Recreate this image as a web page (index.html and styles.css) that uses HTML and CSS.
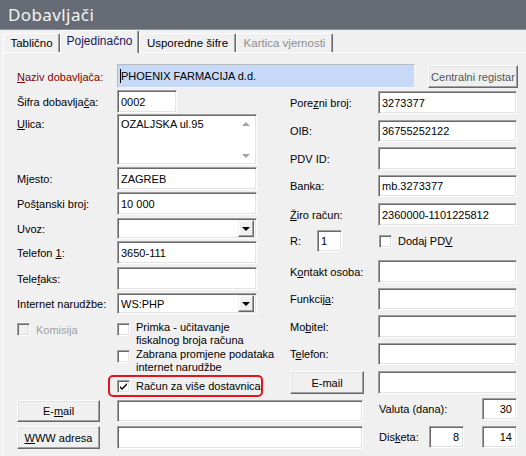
FILE: index.html
```html
<!DOCTYPE html>
<html lang="hr">
<head>
<meta charset="utf-8">
<title>Dobavljači</title>
<link rel="stylesheet" href="styles.css">
</head>
<body>
<div class="window">
  <div class="titlebar">Dobavljači</div>
  <div class="tabs">
    <div class="tab t1">Tablično</div>
    <div class="tab t2 active">Pojedinačno</div>
    <div class="tab t3">Usporedne šifre</div>
    <div class="tab t4 disabled">Kartica vjernosti</div>
  </div>
  <div class="panel">
    <div class="toprow">
      <div class="lbl naziv-lbl"><span><u>N</u>aziv dobavljača:</span></div>
      <div class="inp naziv"><span class="caret"></span><span>PHOENIX FARMACIJA d.d.</span></div>
      <div class="btn central">Centralni registar</div>
    </div>

    <div class="cols">
      <div class="lcol">
        <div class="field f-sifra"><div class="lbl"><span>Šifra dobavlja<u>č</u>a:</span></div><div class="inp w60">0002</div></div>
        <div class="field f-ulica"><div class="lbl top"><span><u>U</u>lica:</span></div>
          <div class="inp textarea"><span class="ta-text">OZALJSKA ul.95</span>
            <span class="scroll"><span class="tri up"></span><span class="tri down"></span></span>
          </div>
        </div>
        <div class="field f-mjesto"><div class="lbl"><span>M<u>j</u>esto:</span></div><div class="inp w140">ZAGREB</div></div>
        <div class="field f-post"><div class="lbl"><span>Poš<u>t</u>anski broj:</span></div><div class="inp w140">10 000</div></div>
        <div class="field f-uvoz"><div class="lbl"><span>Uvoz:</span></div><div class="inp w140 sel"><span class="seltext"></span><span class="dd"><span class="tri-d"></span></span></div></div>
        <div class="field f-tel"><div class="lbl"><span>Telefon <u>1</u>:</span></div><div class="inp w140">3650-111</div></div>
        <div class="field f-fax"><div class="lbl"><span>Tele<u>f</u>aks:</span></div><div class="inp w140"></div></div>
        <div class="field f-inet"><div class="lbl"><span>Internet narudžbe:</span></div><div class="inp w140 sel"><span class="seltext">WS:PHP</span><span class="dd"><span class="tri-d"></span></span></div></div>

        <div class="chkrow r-primka">
          <div class="komisija"><span class="cb dis"></span><span class="cbl dis-t">Komisija</span></div>
          <div class="chk"><span class="cb"></span><span class="cbl two">Primka - učitavanje<br>fiskalnog broja računa</span></div>
        </div>
        <div class="chkrow r-zabrana">
          <div class="chk"><span class="cb"></span><span class="cbl two">Zabrana promjene podataka<br>internet narudžbe</span></div>
        </div>
        <div class="redbox">
          <span class="cb"><svg class="tick" viewBox="0 0 7 7" width="7" height="7"><path d="M0 3 L2 5 L7 0 L7 2 L2 7 L0 5 Z" fill="#000"/></svg></span>
          <span class="cbl">Račun za više dostavnica</span>
        </div>
      </div>

      <div class="rcol">
        <div class="field r-porez"><div class="lbl rl"><span>Pore<u>z</u>ni broj:</span></div><div class="inp w139">3273377</div></div>
        <div class="field r-oib"><div class="lbl rl"><span>OIB:</span></div><div class="inp w139">36755252122</div></div>
        <div class="field r-pdv"><div class="lbl rl"><span>PDV ID:</span></div><div class="inp w139"></div></div>
        <div class="field r-banka"><div class="lbl rl"><span>Banka:</span></div><div class="inp w139">mb.3273377</div></div>
        <div class="field r-ziro"><div class="lbl rl"><span><u>Ž</u>iro račun:</span></div><div class="inp w139">2360000-1101225812</div></div>
        <div class="field r-r">
          <div class="lbl rlr"><span>R:</span></div><div class="inp w25">1</div>
          <div class="chk pdv"><span class="cb"></span><span class="cbl">Dodaj PD<u>V</u></span></div>
        </div>
        <div class="field r-kontakt"><div class="lbl rl"><span>K<u>o</u>ntakt osoba:</span></div><div class="inp w139"></div></div>
        <div class="field r-funk"><div class="lbl rl"><span>Funkcij<u>a</u>:</span></div><div class="inp w139"></div></div>
        <div class="field r-mob"><div class="lbl rl"><span>Mo<u>b</u>itel:</span></div><div class="inp w139"></div></div>
        <div class="field r-telefon"><div class="lbl rl"><span>T<u>e</u>lefon:</span></div><div class="inp w139"></div></div>
        <div class="field r-email"><div class="btn btn-re">E-mail</div><div class="inp w139"></div></div>
      </div>
    </div>

    <div class="bottom">
      <div class="bleft">
        <div class="field b-email"><div class="btn btn-l"><span>E-<u>m</u>ail</span></div><div class="inp w246"></div></div>
        <div class="field b-www"><div class="btn btn-l"><span><u>W</u>WW adresa</span></div><div class="inp w246"></div></div>
      </div>
      <div class="bright">
        <div class="field b-valuta"><div class="lbl vl"><span>Valuta (dana):</span></div><div class="inp w35 num">30</div></div>
        <div class="field b-disk"><div class="lbl dl"><span>Dis<u>k</u>eta:</span></div><div class="inp w35 num">8</div><div class="inp w35 num gap18">14</div></div>
      </div>
    </div>
  </div>
</div>
</body>
</html>
```
FILE: styles.css
```css
* { box-sizing: border-box; }
html, body { margin: 0; padding: 0; }
body {
  width: 526px;
  height: 456px;
  overflow: hidden;
  background: #f0f0f0;
  font-family: "Liberation Sans", Arial, sans-serif;
  font-size: 11px;
  color: #000;
}
u { text-decoration: underline; text-underline-offset: 1px; }

.titlebar {
  height: 30px;
  background: #676b76;
  color: #f4f4f4;
  font-family: "Noto Sans", "DejaVu Sans", sans-serif;
  font-size: 17px;
  letter-spacing: 0.4px;
  padding-left: 8px;
  display: flex;
  align-items: center;
  border-bottom: 1px solid #8d9098;
}

.tabs {
  height: 22px;
  display: flex;
  align-items: flex-end;
  padding-left: 3px;
  position: relative;
  z-index: 2;
}
.tab {
  height: 19px;
  border: 1px solid;
  border-color: #fff #696969 transparent #fff;
  box-shadow: inset -1px 0 #a0a0a0;
  border-radius: 2px 2px 0 0;
  display: flex;
  align-items: center;
  justify-content: center;
  font-size: 11.5px;
  background: #f0f0f0;
  border-bottom: none;
}
.t1 { width: 57px; }
.t2 { width: 79px; }
.t3 { width: 97px; }
.t4 { width: 97px; }
.tab.active {
  height: 23px;
  margin-bottom: -1px;
  color: #18185a;
  padding-bottom: 2px;
  font-size: 12px;
}
.tab.disabled { color: #8f8f8f; }

.panel {
  margin-left: 2px;
  height: 405px;
  border-top: 1px solid #fff;
  border-left: 1px solid #fff;
  padding: 11px 0 0 14px;
  position: relative;
  z-index: 1;
}

.lbl {
  width: 100px;
  flex: none;
  display: flex;
  align-items: center;
  align-self: stretch;
  white-space: nowrap;
}
.lbl.top { align-items: flex-start; padding-top: 4px; }
.naziv-lbl { color: #800000; }

.inp {
  background: #fff;
  border: 1px solid;
  border-color: #a0a0a0 #fff #fff #a0a0a0;
  box-shadow: inset 1px 1px #696969, inset -1px -1px #e3e3e3;
  padding: 0 2px 0 3px;
  display: flex;
  align-items: center;
  flex: none;
  white-space: nowrap;
  overflow: hidden;
  height: 23px;
}
.w60 { width: 60px; }
.w140 { width: 140px; }
.w139 { width: 139px; }
.w25 { width: 25px; }
.w35 { width: 35px; }
.w246 { width: 246px; }
.num { justify-content: flex-end; padding-right: 4px; }
.gap18 { margin-left: 18px; }

.btn {
  background: #f0f0f0;
  border: 1px solid;
  border-color: #fff #696969 #696969 #fff;
  box-shadow: inset -1px -1px #a0a0a0, inset 1px 1px #e3e3e3;
  display: flex;
  align-items: center;
  justify-content: center;
  flex: none;
  white-space: nowrap;
}

.toprow { display: flex; height: 26px; }
.naziv {
  width: 298px;
  height: 24px;
  background: #c7d9f7;
  border-color: #b8bcc4 #f4f4f4 #f4f4f4 #b8bcc4;
  box-shadow: none;
  padding-left: 2px;
}
.caret { width: 1px; height: 14px; background: #000; }
.central {
  width: 90px;
  height: 23px;
  margin-left: 13px;
  margin-top: 1px;
  color: #555;
}

.cols { display: flex; }
.lcol { width: 273px; flex: none; }
.rcol { width: 228px; flex: none; }

.field { display: flex; align-items: flex-start; }

/* left column rows */
.f-sifra { margin-bottom: 1px; }
.f-ulica { margin-bottom: 2px; }
.f-mjesto { margin-bottom: 2px; }
.f-post { margin-bottom: 3px; }
.f-uvoz { margin-bottom: 2px; }
.f-tel { margin-bottom: 3px; }
.f-fax { margin-bottom: 3px; }
.f-uvoz .inp, .f-inet .inp { height: 21px; }

.textarea {
  width: 140px;
  height: 51px;
  align-items: flex-start;
  padding: 0 0 0 3px;
}
.ta-text { flex: 1; padding-top: 3px; }
.scroll {
  width: 16px;
  height: 100%;
  display: flex;
  flex-direction: column;
  justify-content: space-between;
  align-items: center;
  padding: 7px 0 6px;
  margin-right: 2px;
}
.tri { width: 0; height: 0; border-left: 4px solid transparent; border-right: 4px solid transparent; }
.tri.up { border-bottom: 4px solid #a3a3a3; }
.tri.down { border-top: 4px solid #a3a3a3; }

.sel { padding-right: 2px; }
.seltext { flex: 1; }
.dd {
  width: 16px;
  height: 17px;
  background: #f0f0f0;
  border: 1px solid;
  border-color: #f0f0f0 #696969 #696969 #f0f0f0;
  box-shadow: inset -1px -1px #a0a0a0, inset 1px 1px #fff;
  display: flex;
  align-items: center;
  justify-content: center;
}
.tri-d { width: 0; height: 0; border-left: 4px solid transparent; border-right: 4px solid transparent; border-top: 4px solid #000; margin-top: 1px; }

/* checkboxes */
.cb {
  width: 13px;
  height: 13px;
  flex: none;
  background: #fff;
  border: 1px solid;
  border-color: #a0a0a0 #fff #fff #a0a0a0;
  box-shadow: inset 1px 1px #696969, inset -1px -1px #e3e3e3;
  display: flex;
  align-items: center;
  justify-content: center;
}
.cb.dis { background: #f0f0f0; }
.cbl { margin-left: 6px; line-height: 13px; white-space: nowrap; }
.dis-t { color: #a0a0a0; }
.chk { display: flex; align-items: flex-start; }
.chk .cb { margin-top: 2px; }

.chkrow { display: flex; }
.r-primka { margin-top: 7px; }
.r-zabrana { margin-top: 1px; padding-left: 100px; }
.komisija { width: 100px; display: flex; align-items: flex-start; padding-top: 2px; }
.komisija .cbl { margin-top: 1px; }

.redbox {
  margin-top: 1px;
  margin-left: 91px;
  width: 155px;
  height: 22px;
  border: 2px solid #e4141c;
  border-radius: 5px;
  display: flex;
  align-items: center;
  padding-left: 7px;
}
.redbox .cbl { margin-top: 1px; }
.tick { display: block; }

/* right column rows */
.rl { width: 88px; }
.rlr { width: 27px; }
.r-porez { margin-top: 1px; margin-bottom: 6px; }
.r-oib, .r-pdv, .r-kontakt, .r-funk, .r-mob { margin-bottom: 5px; }
.r-banka, .r-telefon { margin-bottom: 6px; }
.r-ziro { margin-bottom: 4px; }
.r-r { margin-bottom: 8px; }
.r-oib .inp, .r-banka .inp, .r-r .inp, .r-funk .inp, .r-telefon .inp { height: 22px; }
.pdv { margin-left: 37px; align-self: center; }
.pdv .cb { margin-top: 0; }
.btn-re { width: 74px; height: 23px; margin-right: 14px; }

/* bottom */
.bottom { display: flex; }
.bleft { width: 362px; flex: none; }
.bright { width: 140px; flex: none; }
.btn-l { width: 83px; margin-right: 17px; }
.b-email { margin-top: 3px; margin-bottom: 4px; }
.b-email .btn, .b-email .inp { height: 22px; }
.b-www .btn, .b-www .inp { height: 23px; }
.b-valuta { margin-top: 1px; margin-bottom: 6px; }
.b-valuta .inp, .b-disk .inp { height: 22px; }
.vl { width: 103px; }
.dl { width: 50px; }
```
